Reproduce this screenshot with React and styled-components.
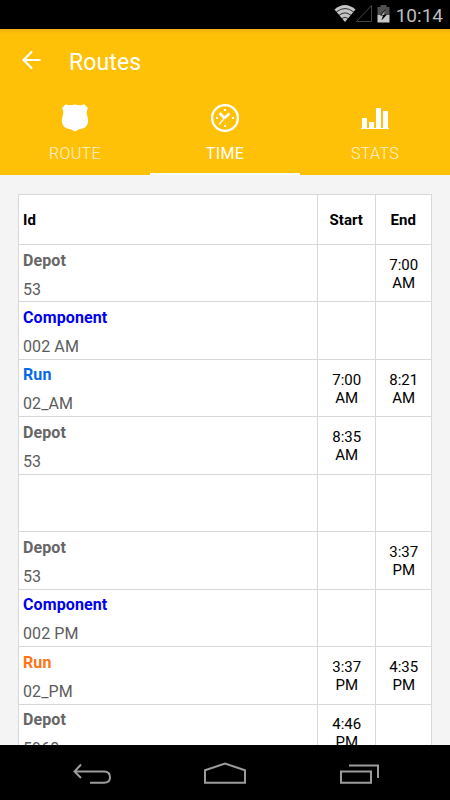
import React from "react";
import styled, { createGlobalStyle } from "styled-components";

const GlobalStyle = createGlobalStyle`
  * {
    box-sizing: border-box;
  }
  body {
    margin: 0;
    font-family: Roboto, "Liberation Sans", sans-serif;
    background: #000;
  }
  svg {
    display: block;
  }
`;

const Screen = styled.div`
  width: 450px;
  height: 800px;
  display: flex;
  flex-direction: column;
  overflow: hidden;
  background: #f4f4f4;
`;

const StatusBar = styled.div`
  flex: 0 0 29px;
  display: flex;
  justify-content: flex-end;
  padding: 3px 7px 0 0;
  background: #000;
  color: #bdbdbd;
  font-size: 19px;
  line-height: 25px;
`;

const Clock = styled.span`
  margin-left: 6px;
`;

const Header = styled.header`
  flex: 0 0 146px;
  background: linear-gradient(#eeb20c, #ffc107 5px);
  color: #fff;
`;

const Toolbar = styled.div`
  height: 66px;
  display: flex;
  align-items: center;
  padding-left: 22px;
  svg {
    margin-top: -4px;
  }
`;

const Title = styled.h1`
  margin: 1px 0 0 28px;
  font-size: 23px;
  font-weight: 400;
  line-height: 30px;
  letter-spacing: 0.1px;
`;

const Tabs = styled.nav`
  display: grid;
  grid-template-columns: repeat(3, 150px);
  height: 80px;
`;

const Tab = styled.div`
  display: flex;
  flex-direction: column;
  align-items: center;
  padding-top: 8px;
  border-bottom: 2px solid ${(props) => (props.$active ? "#fff" : "transparent")};
`;

const TabLabel = styled.span`
  margin-top: 11px;
  font-size: 16px;
  font-weight: ${(props) => (props.$active ? 400 : 300)};
  line-height: 20px;
  letter-spacing: 0.35px;
  opacity: ${(props) => (props.$active ? 1 : 0.8)};
`;

const Content = styled.main`
  flex: 1;
  min-height: 0;
  overflow: hidden;
  padding: 19px 18px 0;
`;

const Table = styled.div`
  width: 414px;
  border-top: 1px solid #d8d8dc;
  border-left: 1px solid #d8d8dc;
  background: #fff;
`;

const Row = styled.div`
  display: grid;
  grid-template-columns: 299px 57.5px 56.5px;
  grid-template-rows: 100%;
  height: ${(props) => (props.$head ? 50 : 57.45)}px;
`;

const Cell = styled.div`
  border-right: 1px solid #d8d8dc;
  border-bottom: 1px solid #d8d8dc;
  padding: 0.6px 0 0 4px;
`;

const TimeCell = styled(Cell)`
  display: flex;
  align-items: center;
  justify-content: center;
  padding: 1px 8px 0 9px;
  color: #000;
  font-size: 15px;
  line-height: 18px;
  text-align: center;
`;

const HeadCell = styled(TimeCell)`
  justify-content: ${(props) => (props.$left ? "flex-start" : "center")};
  padding: 0 0 0 ${(props) => (props.$left ? 4 : 0)}px;
  font-weight: 700;
`;

const Kind = styled.div`
  color: ${(props) => props.$color};
  font-size: 16px;
  font-weight: 700;
  line-height: 29px;
  letter-spacing: 0.1px;
`;

const Name = styled.div`
  color: #5c5c5c;
  font-size: 16px;
  line-height: 29px;
  letter-spacing: 0.1px;
`;

const NavBar = styled.div`
  flex: 0 0 55px;
  display: flex;
  background: #000;
`;

const WifiIcon = () => (
  <svg width="22" height="20" viewBox="0 0 24 20" preserveAspectRatio="none">
    <path d="M0.500 6.500Q12 -2.500 23.500 6.500L12 19Z" fill="#c4c4c4" />
    <path
      d="M2.500 9Q12 2 21.500 9M5.500 12.300Q12 7.500 18.500 12.300M8.500 15.500Q12 13 15.500 15.500"
      fill="none"
      stroke="#000"
      strokeWidth="0.800"
    />
  </svg>
);

const SignalIcon = () => (
  <svg width="17" height="20" viewBox="0 0 17 20">
    <path d="M0.500 18.500H15.500V2.500Z" fill="none" stroke="#444" />
  </svg>
);

const BatteryIcon = () => (
  <svg width="17" height="20" viewBox="-4 0 17 20">
    <path d="M3.500 2H9.500V4H12.500V12H0.500V4H3.500Z" fill="#505050" />
    <path d="M0.500 12H12.500V19.500H0.500Z" fill="#c8c8c8" />
    <path d="M8.500 6L3 12.500H6L4.500 17.500L10 11.500H7Z" fill="#000" />
    <path d="M8 7.500L4.500 12H7Z" fill="#aaa" />
  </svg>
);

const ArrowIcon = () => (
  <svg width="19" height="20" viewBox="0 0 19 20">
    <path
      d="M18.500 10H2M10 1.500L1.500 10L10 18.500"
      fill="none"
      stroke="#fff"
      strokeWidth="2.200"
    />
  </svg>
);

const ShieldIcon = () => (
  <svg width="30" height="30" viewBox="0 0 30 30">
    <path
      d="M5.800 1.200Q10.500 3.500 15 1.200Q19.500 3.500 24.200 1.200L28 5Q25.500 9.500 27.800 14.500Q29.500 22.500 23.500 25.200Q18 26 15 28.500Q12 26 6.500 25.200Q0.500 22.500 2.200 14.500Q4.500 9.500 2 5Z"
      fill="#fff"
    />
  </svg>
);

const ClockIcon = () => (
  <svg width="30" height="30" viewBox="0 0 30 30" fill="none" stroke="#fff">
    <circle cx="15" cy="15" r="12.900" strokeWidth="2.300" />
    <path d="M15 6V8M15 22V24M6 15H8M22 15H24" strokeWidth="2" />
    <path d="M9.500 10L14.500 15" strokeWidth="2.800" />
    <path d="M19.500 10.500L14.500 15" strokeWidth="2.600" />
    <path d="M15 14.500L9 21.500" strokeWidth="1.300" />
  </svg>
);

const StatsIcon = () => (
  <svg width="30" height="30" viewBox="0 0 30 30" fill="#fff">
    <path d="M2 15H7V25H2ZM9 19H14V25H9ZM16 5H21V25H16ZM23 8H28V25H23ZM1 25H29V26H1Z" />
  </svg>
);

const NavIcons = () => (
  <svg
    width="450"
    height="55"
    viewBox="0 0 450 55"
    fill="none"
    stroke="#9c9c9c"
    strokeWidth="2"
  >
    <path d="M90 37.700H104Q110 37.700 110 32.200Q110 26.500 104 26.500H75M81 19.500L74.500 26.500L81 33" />
    <path d="M205 37.700V25.300L225 18.500L245 25.300V37.700Z" />
    <path d="M341 26.500H371V37.700H341ZM349 20.500H378V33" />
  </svg>
);

const tabs = [
  { label: "ROUTE", icon: <ShieldIcon /> },
  { label: "TIME", icon: <ClockIcon />, active: true },
  { label: "STATS", icon: <StatsIcon /> },
];

const GREY = "#666";
const BLUE = "#0000f0";

const rows = [
  { kind: "Depot", color: GREY, name: "53", end: "7:00 AM" },
  { kind: "Component", color: BLUE, name: "002 AM" },
  { kind: "Run", color: "#0468e8", name: "02_AM", start: "7:00 AM", end: "8:21 AM" },
  { kind: "Depot", color: GREY, name: "53", start: "8:35 AM" },
  {},
  { kind: "Depot", color: GREY, name: "53", end: "3:37 PM" },
  { kind: "Component", color: BLUE, name: "002 PM" },
  { kind: "Run", color: "#ff7416", name: "02_PM", start: "3:37 PM", end: "4:35 PM" },
  { kind: "Depot", color: GREY, name: "5968", start: "4:46 PM" },
];

const App = () => (
  <>
    <GlobalStyle />
    <Screen>
      <StatusBar>
        <WifiIcon />
        <SignalIcon />
        <BatteryIcon />
        <Clock>10:14</Clock>
      </StatusBar>
      <Header>
        <Toolbar>
          <ArrowIcon />
          <Title>Routes</Title>
        </Toolbar>
        <Tabs>
          {tabs.map((tab) => (
            <Tab key={tab.label} $active={tab.active}>
              {tab.icon}
              <TabLabel $active={tab.active}>{tab.label}</TabLabel>
            </Tab>
          ))}
        </Tabs>
      </Header>
      <Content>
        <Table>
          <Row $head>
            <HeadCell $left>Id</HeadCell>
            <HeadCell>Start</HeadCell>
            <HeadCell>End</HeadCell>
          </Row>
          {rows.map((row, index) => (
            <Row key={index}>
              <Cell>
                <Kind $color={row.color}>{row.kind}</Kind>
                <Name>{row.name}</Name>
              </Cell>
              <TimeCell>{row.start}</TimeCell>
              <TimeCell>{row.end}</TimeCell>
            </Row>
          ))}
        </Table>
      </Content>
      <NavBar>
        <NavIcons />
      </NavBar>
    </Screen>
  </>
);

export default App;
